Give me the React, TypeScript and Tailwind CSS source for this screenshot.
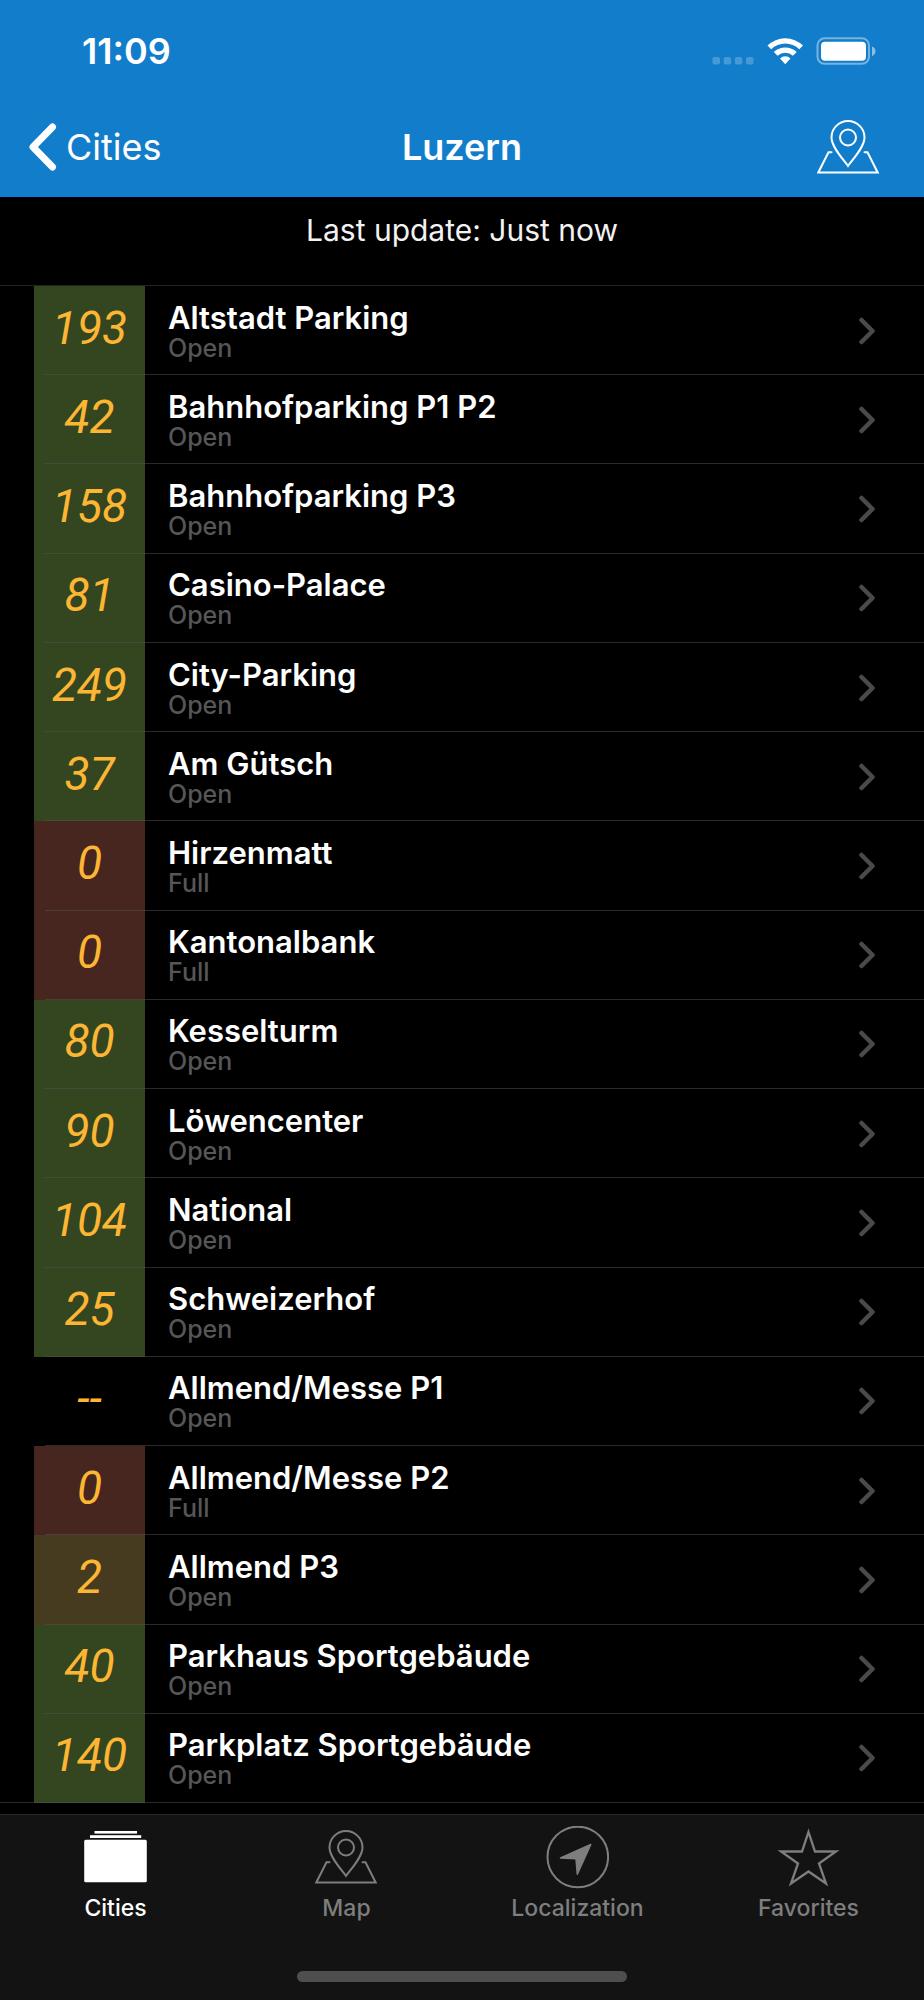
import React from "react";

type Level = "free" | "few" | "full" | "none";

interface Lot {
  name: string;
  spaces: string;
  status: "Open" | "Full";
  level: Level;
}

const lots: Lot[] = [
  { name: "Altstadt Parking", spaces: "193", status: "Open", level: "free" },
  { name: "Bahnhofparking P1 P2", spaces: "42", status: "Open", level: "free" },
  { name: "Bahnhofparking P3", spaces: "158", status: "Open", level: "free" },
  { name: "Casino-Palace", spaces: "81", status: "Open", level: "free" },
  { name: "City-Parking", spaces: "249", status: "Open", level: "free" },
  { name: "Am Gütsch", spaces: "37", status: "Open", level: "free" },
  { name: "Hirzenmatt", spaces: "0", status: "Full", level: "full" },
  { name: "Kantonalbank", spaces: "0", status: "Full", level: "full" },
  { name: "Kesselturm", spaces: "80", status: "Open", level: "free" },
  { name: "Löwencenter", spaces: "90", status: "Open", level: "free" },
  { name: "National", spaces: "104", status: "Open", level: "free" },
  { name: "Schweizerhof", spaces: "25", status: "Open", level: "free" },
  { name: "Allmend/Messe P1", spaces: "--", status: "Open", level: "none" },
  { name: "Allmend/Messe P2", spaces: "0", status: "Full", level: "full" },
  { name: "Allmend P3", spaces: "2", status: "Open", level: "few" },
  { name: "Parkhaus Sportgebäude", spaces: "40", status: "Open", level: "free" },
  { name: "Parkplatz Sportgebäude", spaces: "140", status: "Open", level: "free" },
];

const levelColor: Record<Level, string> = {
  free: "bg-[#34461f]",
  few: "bg-[#463a1f]",
  full: "bg-[#46261f]",
  none: "bg-black",
};

function PinShape() {
  return (
    <g fill="none" stroke="currentColor" strokeWidth="2" strokeLinecap="round">
      <path d="M31 46C26 39 14.500 27 14.500 17.500a16.500 16.500 0 0 1 33 0C47.500 27 36 39 31 46Z" />
      <circle cx="31" cy="17.500" r="8" />
      <path strokeLinejoin="miter" d="M14.500 32.200H11.500L1.300 52.500H60.700L50.500 32.200H47.500" />
    </g>
  );
}

function Signal() {
  return (
    <svg className="h-[28px] w-[165px]" viewBox="0 0 165 28" aria-hidden="true">
      <g fill="#fff" fillOpacity="0.22">
        <rect x="1.500" y="20" width="7.500" height="7.500" rx="2" />
        <rect x="12.700" y="20" width="7.500" height="7.500" rx="2" />
        <rect x="23.800" y="20" width="7.500" height="7.500" rx="2" />
        <rect x="35" y="20" width="7.500" height="7.500" rx="2" />
      </g>
      <g fill="#fff">
        <path d="M56.500 8.600A25 25 0 0 1 92 8.600L88.300 12.300A20 20 0 0 0 60.200 12.300Z" />
        <path d="M62.800 15A16.500 16.500 0 0 1 85.700 15L81.900 18.800A11 11 0 0 0 66.600 18.800Z" />
        <path d="M69 21.400A7.500 7.500 0 0 1 79.500 21.400L74.250 27.200Z" />
      </g>
      <rect x="106.500" y="1.300" width="51.500" height="25.500" rx="7" fill="none" stroke="#fff" strokeOpacity="0.42" strokeWidth="2" />
      <rect x="110" y="4.800" width="45" height="19" rx="4" fill="#fff" />
      <path d="M161 9.500Q164.500 11 164.500 14Q164.500 17.500 161 19Z" fill="#fff" fillOpacity="0.5" />
    </svg>
  );
}

function Header() {
  return (
    <header className="bg-[#127dca] pb-1 text-white">
      <div className="flex h-[101px] items-center justify-between pl-[82px] pr-12">
        <time className="text-[36px] font-semibold leading-[42px]">11:09</time>
        <Signal />
      </div>
      <nav className="grid h-[92px] grid-cols-[1fr_auto_1fr] items-center px-7">
        <a href="#cities" className="flex items-center gap-[9px] justify-self-start">
          <svg className="h-[48px] w-[29px]" viewBox="0 0 29 48" aria-hidden="true">
            <path d="M24.500 4L5 24L24.500 44" fill="none" stroke="currentColor" strokeWidth="7" strokeLinecap="round" strokeLinejoin="round" />
          </svg>
          <span className="text-[36px] leading-[44px]">Cities</span>
        </a>
        <h1 className="text-[36px] font-semibold leading-[44px]">Luzern</h1>
        <button type="button" aria-label="Show on map" className="mr-4 justify-self-end">
          <svg className="h-[54px] w-[63px]" viewBox="0 0 63 54" aria-hidden="true">
            <PinShape />
          </svg>
        </button>
      </nav>
    </header>
  );
}

function LotRow({ lot, last }: { lot: Lot; last: boolean }) {
  return (
    <li className="relative flex">
      <a href="#lot" className="flex flex-1 items-stretch pl-[34px] pr-12">
        <span
          className={`flex w-[111px] items-center justify-center pb-1.5 font-['Roboto',sans-serif] text-[46px] font-normal italic leading-[48px] text-[#fdb534] ${levelColor[lot.level]}`}
        >
          {lot.spaces}
        </span>
        <span className="flex flex-1 flex-col justify-center pl-[23px] pt-0.5">
          <span className="text-[31px] font-semibold leading-8 text-white">{lot.name}</span>
          <span className="text-[25px] font-medium leading-7 text-[#565656]">{lot.status}</span>
        </span>
        <svg className="h-7 w-[18px] self-center" viewBox="0 0 18 28" aria-hidden="true">
          <path d="M3.500 3L14.500 14L3.500 25" fill="none" stroke="#4a4a4d" strokeWidth="4.500" strokeLinecap="round" strokeLinejoin="round" />
        </svg>
      </a>
      <div className={`absolute bottom-0 right-0 h-px bg-[#545458]/50 ${last ? "left-0" : "left-[45px]"}`} />
    </li>
  );
}

function TabIcon({ children }: { children: React.ReactNode }) {
  return (
    <svg className="h-[63px] w-[63px]" viewBox="0 0 63 63" aria-hidden="true">
      {children}
    </svg>
  );
}

function Tab({ label, active, children }: { label: string; active?: boolean; children: React.ReactNode }) {
  return (
    <a
      href={`#${label.toLowerCase()}`}
      aria-current={active ? "page" : undefined}
      className={`flex flex-col items-center gap-[5px] ${active ? "text-white" : "text-[#7e7e7e]"}`}
    >
      <TabIcon>{children}</TabIcon>
      <span className="text-[23px] font-medium leading-7">{label}</span>
    </a>
  );
}

function TabBar() {
  return (
    <footer className="flex h-[186px] flex-col justify-between border-t border-[#272727] bg-[#131313] pb-[18px] pt-[11px]">
      <nav className="grid grid-cols-4">
        <Tab label="Cities" active>
          <g fill="currentColor">
            <rect x="10.500" y="5" width="42.500" height="2.600" />
            <rect x="6" y="9.200" width="51.200" height="2.800" />
            <rect x="0.200" y="13.800" width="62.600" height="42.400" rx="1.500" />
          </g>
        </Tab>
        <Tab label="Map">
          <g transform="translate(0 4)">
            <PinShape />
          </g>
        </Tab>
        <Tab label="Localization">
          <circle cx="31.800" cy="31" r="30.300" fill="none" stroke="currentColor" strokeWidth="2" />
          <path d="M44.800 18.500L31.300 48.300L30 32.800L14.500 32Z" fill="currentColor" stroke="currentColor" strokeWidth="1.500" strokeLinejoin="round" />
        </Tab>
        <Tab label="Favorites">
          <path
            d="M31.500 6L38 25.500H59L42 37.500L49 57.500L31.500 45.500L14 57.500L21 37.500L4 25.500H25Z"
            fill="none"
            stroke="currentColor"
            strokeWidth="2.300"
            strokeLinejoin="miter"
            strokeMiterlimit="10"
          />
        </Tab>
      </nav>
      <div className="h-[11px] w-[330px] self-center rounded-full bg-[#4e4e4e]" />
    </footer>
  );
}

export default function App() {
  return (
    <div className="flex min-h-screen flex-col bg-black font-['Inter',sans-serif]">
      <Header />
      <main className="flex flex-1 flex-col pb-[11px]">
        <p className="h-[89px] border-b border-[#222224] pt-[13px] text-center text-[30px] leading-[40px] text-[#f2f2f2]">
          Last update: Just now
        </p>
        <ul className="grid flex-1 auto-rows-fr">
          {lots.map((lot, i) => (
            <LotRow key={lot.name} lot={lot} last={i === lots.length - 1} />
          ))}
        </ul>
      </main>
      <TabBar />
    </div>
  );
}
